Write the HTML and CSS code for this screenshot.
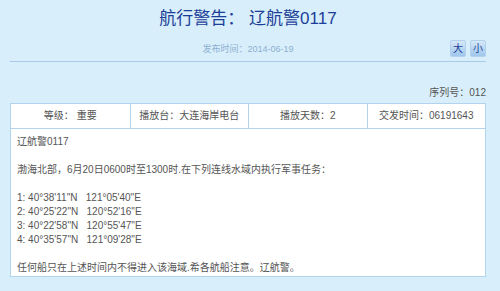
FILE: index.html
```html
<!DOCTYPE html>
<html lang="zh-CN">
<head>
    <meta charset="UTF-8">
    <meta name="viewport" content="width=device-width, initial-scale=1.0">
    <title>航行警告</title>
    <link rel="stylesheet" href="styles.css">
</head>
<body>
    <div class="page">
        <h1 class="title">航行警告： 辽航警0117</h1>
        <div class="meta">
            <span></span>
            <span class="date">发布时间：2014-06-19</span>
            <span class="sizes">
                <button class="size-btn">大</button>
                <button class="size-btn">小</button>
            </span>
        </div>
        <div class="serial">序列号：012</div>
        <div class="notice">
            <div class="cells">
                <div class="cell">等级：&nbsp;重要</div>
                <div class="cell">播放台：大连海岸电台</div>
                <div class="cell">播放天数：2</div>
                <div class="cell">交发时间：06191643</div>
            </div>
            <div class="content">
                <p>辽航警0117</p>
                <p class="blank"></p>
                <p>渤海北部，6月20日0600时至1300时.在下列连线水域内执行军事任务：</p>
                <p class="blank"></p>
                <p>1: 40°38'11"N&nbsp;&nbsp;&nbsp;121°05'40"E</p>
                <p>2: 40°25'22"N&nbsp;&nbsp;&nbsp;120°52'16"E</p>
                <p>3: 40°22'58"N&nbsp;&nbsp;&nbsp;120°55'47"E</p>
                <p>4: 40°35'57"N&nbsp;&nbsp;&nbsp;121°09'28"E</p>
                <p class="blank"></p>
                <p>任何船只在上述时间内不得进入该海域.希各航船注意。辽航警。</p>
            </div>
        </div>
    </div>
</body>
</html>
```

FILE: styles.css
```css
body {
    font-family: 'Liberation Sans', 'Noto Sans CJK SC', sans-serif;
    background-color: #d8eefa;
    color: #555;
    margin: 0;
    padding: 0;
}
.page {
    width: 476px;
    margin-left: 10px;
}
.title {
    margin: 0;
    padding-top: 9px;
    font-size: 17px;
    line-height: 20px;
    font-weight: normal;
    text-align: center;
    color: #1b3f98;
}
.meta {
    display: grid;
    grid-template-columns: 1fr auto 1fr;
    align-items: center;
    margin-top: 11px;
    height: 17px;
    padding-bottom: 4px;
    border-bottom: 1px solid #a9c9e8;
}
.date {
    font-size: 9px;
    color: #8db0d2;
}
.sizes {
    display: flex;
    justify-content: flex-end;
    gap: 4px;
}
.size-btn {
    width: 16px;
    height: 17px;
    padding: 0;
    font-family: inherit;
    font-size: 10px;
    line-height: 15px;
    color: #1b3f98;
    background: linear-gradient(#d6e8f8, #9fc6ec);
    border: 1px solid #b3d1ee;
    border-radius: 2px;
    cursor: pointer;
}
.serial {
    margin-top: 24px;
    margin-bottom: 3px;
    font-size: 10px;
    line-height: 14px;
    text-align: right;
    color: #555;
}
.notice {
    background-color: #fff;
    border: 1px solid #b3d2ee;
}
.cells {
    display: grid;
    grid-template-columns: repeat(4, 1fr);
    border-bottom: 1px solid #b3d2ee;
}
.cell {
    font-size: 10px;
    line-height: 24px;
    text-align: center;
    color: #555;
    border-left: 1px solid #b3d2ee;
}
.cell:first-child {
    border-left: none;
}
.content {
    padding: 6px 6px 1px 6px;
    font-size: 10px;
    line-height: 14px;
}
.content p {
    margin: 0;
}
.blank {
    height: 14px;
}
```
